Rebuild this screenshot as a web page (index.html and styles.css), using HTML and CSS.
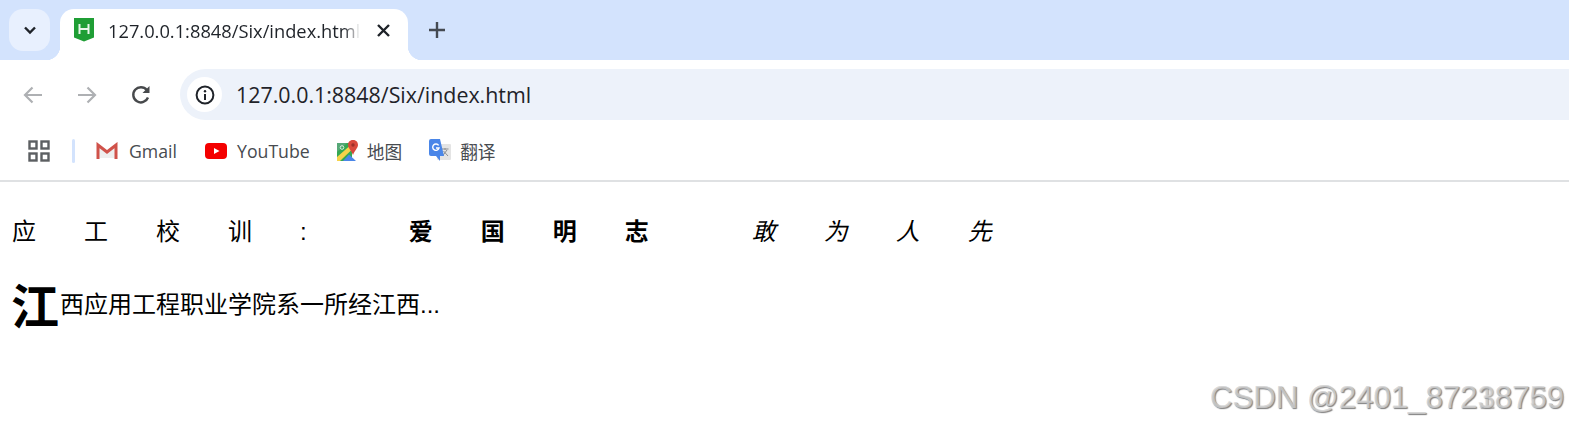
FILE: index.html
```html
<!DOCTYPE html>
<html lang="en">
<head>
  <meta charset="UTF-8" />
  <meta name="viewport" content="width=device-width, initial-scale=1" />
  <title>127.0.0.1:8848/Six/index.html</title>
  <link rel="stylesheet" href="styles.css">
</head>
<body>

  <!-- Tab strip -->
  <div class="tab-strip">
    <div class="tab-search">
      <svg width="14" height="14" viewBox="0 0 14 14"><path d="M2 4.5 L7 9.5 L12 4.5" fill="none" stroke="#1f2329" stroke-width="2.4"/></svg>
    </div>
    <div class="tab">
      <svg class="favicon" width="20" height="24" viewBox="0 0 20 24">
        <path d="M0 0 H20 V19.5 L10 23.5 L0 19.5 Z" fill="#1f9e35"/>
        <path d="M5.5 6 V16 M14.5 6 V16 M5.5 11 H14.5" fill="none" stroke="#e8f6ea" stroke-width="2"/>
      </svg>
      <span class="tab-title">127.0.0.1:8848/Six/index.html</span>
      <svg class="tab-close" width="13" height="13" viewBox="0 0 13 13"><path d="M1 1 L12 12 M12 1 L1 12" stroke="#1f2329" stroke-width="2.4"/></svg>
    </div>
    <svg class="new-tab" width="16" height="16" viewBox="0 0 16 16"><path d="M8 0 V16 M0 8 H16" stroke="#444a52" stroke-width="2.4"/></svg>
  </div>

  <!-- Toolbar -->
  <div class="toolbar">
    <svg class="nav-icon" width="20" height="18" viewBox="0 0 20 18"><path d="M19 9 H2 M9.5 1.5 L2 9 L9.5 16.5" fill="none" stroke="#aeb0b3" stroke-width="2.2"/></svg>
    <svg class="nav-icon" width="20" height="18" viewBox="0 0 20 18"><path d="M1 9 H18 M10.5 1.5 L18 9 L10.5 16.5" fill="none" stroke="#aeb0b3" stroke-width="2.2"/></svg>
    <svg class="nav-icon" width="20" height="20" viewBox="0 0 20 20"><path d="M17 12.5 A7.6 7.6 0 1 1 15.8 5" fill="none" stroke="#47494c" stroke-width="2.4"/><path d="M18.5 1 V8 H11.5 Z" fill="#47494c"/></svg>
    <div class="omnibox">
      <div class="site-info">
        <svg width="20" height="20" viewBox="0 0 20 20"><circle cx="10" cy="10" r="8.4" fill="none" stroke="#1f2329" stroke-width="2"/><path d="M10 9 V15" stroke="#1f2329" stroke-width="2"/><circle cx="10" cy="6.2" r="1.2" fill="#1f2329"/></svg>
      </div>
      <span class="url">127.0.0.1:8848/Six/index.html</span>
    </div>
  </div>

  <!-- Bookmarks -->
  <div class="bookmarks">
    <svg class="apps" width="22" height="22" viewBox="0 0 22 22">
      <g fill="none" stroke="#5c5f62" stroke-width="2.4">
        <rect x="1.5" y="1.5" width="7" height="7"/><rect x="13.5" y="1.5" width="7" height="7"/>
        <rect x="1.5" y="13.5" width="7" height="7"/><rect x="13.5" y="13.5" width="7" height="7"/>
      </g>
    </svg>
    <div class="divider"></div>
    <div class="bookmark gmail">
      <svg width="22" height="18" viewBox="0 0 22 18">
        <path d="M2 3 L11 10 L20 3 V16 H2 Z" fill="#eeeeee"/>
        <path d="M2 17 V3 L11 10 L20 3 V17" fill="none" stroke="#d0524a" stroke-width="3"/>
      </svg>
      <span>Gmail</span>
    </div>
    <div class="bookmark youtube">
      <svg width="22" height="16" viewBox="0 0 22 16">
        <rect width="22" height="16" rx="4" fill="#f40000"/>
        <path d="M9 5 L14.5 8 L9 11 Z" fill="#fff"/>
      </svg>
      <span>YouTube</span>
    </div>
    <div class="bookmark maps">
      <svg width="22" height="22" viewBox="0 0 22 22">
        <path d="M0 3 H15 V21 H0 Z" fill="#35a853"/>
        <path d="M0 3 H10 L0 12 Z" fill="#56a877"/>
        <circle cx="5" cy="7.5" r="1.8" fill="none" stroke="#dfeee4" stroke-width="1"/>
        <path d="M0 17 L12 6.5 L15 9.5 L3 21 H0 Z" fill="#f6d34a"/>
        <path d="M6 21 L12 14.5 L19 21 Z" fill="#4a86e8"/>
        <path d="M16 0 C12.5 0 11 2.6 11 5 C11 8 14.5 10.5 16 15 C17.5 10.5 21 8 21 5 C21 2.6 19.5 0 16 0 Z" fill="#d9493c"/>
        <circle cx="16" cy="5" r="1.7" fill="#9e2f28"/>
      </svg>
      <span>地图</span>
    </div>
    <div class="bookmark translate">
      <svg width="22" height="24" viewBox="0 0 22 24">
        <rect x="8" y="5" width="14" height="16" rx="1" fill="#e4e4e4"/>
        <path d="M12.5 10 H19.5 M16 9 V11 M13.5 17 L18 11 M14.5 12 L19 17" stroke="#8b8e92" stroke-width="1" fill="none"/>
        <path d="M2 0 H11 L15 17 H11 L11 22 L7 17 H2 Q0 17 0 15 V2 Q0 0 2 0 Z" fill="#4a86e8"/>
        <path d="M9.6 6.4 A3.2 3.2 0 1 0 10 9 H7" fill="none" stroke="#fff" stroke-width="1.4"/>
      </svg>
      <span>翻译</span>
    </div>
  </div>

  <!-- Page content -->
  <div class="content">
    <p class="motto">应工校训:<b class="motto-bold">爱国明志</b><i class="motto-italic">敢为人先</i></p>
    <p class="intro"><span class="first-letter">江</span>西应用工程职业学院系一所经江西...</p>
  </div>

  <div class="watermark">
    <span>CSDN @2401_87218769</span>
    <span class="watermark-over">CSDN @2401_87238759</span>
  </div>

</body>
</html>
```

FILE: styles.css
```css
* {
  box-sizing: border-box;
}
body {
  margin: 0;
  height: 427px;
  overflow: hidden;
  background: white;
  font-family: "Liberation Sans", "Noto Sans CJK SC", sans-serif;
  color: black;
}

/* Tab strip */
.tab-strip {
  height: 60px;
  background: #d3e3fd;
  display: flex;
  align-items: flex-start;
  padding: 9px 0 0 9px;
}

.tab-search {
  width: 41px;
  height: 42px;
  border-radius: 14px;
  background: #e8f0fe;
  display: flex;
  align-items: center;
  justify-content: center;
  margin-right: 10px;
}

.tab {
  position: relative;
  width: 348px;
  height: 51px;
  background: white;
  border-radius: 14px 14px 0 0;
  display: flex;
  align-items: center;
  padding: 0 18px 9px 14px;
}

/* little curves where the tab meets the toolbar */
.tab::before,
.tab::after {
  content: "";
  position: absolute;
  bottom: 0;
  width: 14px;
  height: 14px;
}
.tab::before {
  left: -14px;
  background: radial-gradient(circle at 0 0, #d3e3fd 14px, white 14.5px);
}
.tab::after {
  right: -14px;
  background: radial-gradient(circle at 100% 0, #d3e3fd 14px, white 14.5px);
}

.favicon {
  flex: none;
  margin-right: 14px;
}

.tab-title {
  flex: 1;
  overflow: hidden;
  white-space: nowrap;
  font-family: "Open Sans", sans-serif;
  font-size: 18.3px;
  color: #1f2329;
  -webkit-mask-image: linear-gradient(to right, black 236px, transparent 252px);
  mask-image: linear-gradient(to right, black 236px, transparent 252px);
}

.tab-close {
  flex: none;
}

.new-tab {
  margin: 13px 0 0 21px;
}

/* Toolbar */
.toolbar {
  height: 65px;
  background: white;
  border-radius: 14px 0 0 0;
  display: flex;
  align-items: center;
  padding: 4px 0 0 23px;
  position: relative;
}

.nav-icon {
  flex: none;
  margin-right: 34px;
}

.omnibox {
  flex: 1;
  height: 51px;
  margin-left: -5px;
  background: #edf2fa;
  border-radius: 26px 0 0 26px;
  display: flex;
  align-items: center;
  padding-left: 7px;
}

.site-info {
  width: 35px;
  height: 35px;
  border-radius: 50%;
  background: white;
  display: flex;
  align-items: center;
  justify-content: center;
  margin-right: 14px;
}

.url {
  font-family: "Open Sans", sans-serif;
  font-size: 21.4px;
  color: #1f2329;
}

/* Bookmarks */
.bookmarks {
  height: 57px;
  border-bottom: 2px solid #dfe1e3;
  display: flex;
  align-items: center;
  padding: 0 0 3px 28px;
}

.apps {
  margin-right: 22px;
}

.divider {
  width: 3px;
  height: 24px;
  background: #d3e3fd;
  border-radius: 2px;
  margin-right: 21px;
}

.bookmark {
  display: flex;
  align-items: center;
  font-family: "Open Sans", "Noto Sans CJK SC", sans-serif;
  font-size: 17.7px;
  color: #474b50;
}
.gmail {
  gap: 11px;
  margin-right: 28px;
}
.youtube {
  gap: 10px;
  margin-right: 27px;
}
.maps {
  gap: 8px;
  margin-right: 27px;
}
.translate {
  gap: 9px;
}

/* Page content */
.content {
  padding: 0 12px;
}

.motto {
  margin: 34px 0 0;
  font-size: 24px;
  line-height: 32px;
  letter-spacing: 48px;
  white-space: nowrap;
}
.motto-bold {
  margin-left: 54px;
}
.motto-italic {
  margin-left: 55px;
}

.intro {
  margin: 24px 0 0;
  font-size: 24px;
  line-height: 66px;
  white-space: nowrap;
}
.first-letter {
  font-size: 48px;
  line-height: 1;
  font-weight: bold;
  vertical-align: -11px;
  margin-left: -1px;
  margin-right: 1px;
}

.watermark {
  position: absolute;
  left: 1210px;
  top: 380px;
  font-family: "Liberation Sans", sans-serif;
  font-size: 31.2px;
  line-height: 36px;
  white-space: nowrap;
  color: rgba(215, 215, 215, 0.7);
  text-shadow: 1px 1px 1px rgba(110, 110, 110, 0.6);
}
.watermark-over {
  position: absolute;
  left: 0;
  top: 0;
}
```
